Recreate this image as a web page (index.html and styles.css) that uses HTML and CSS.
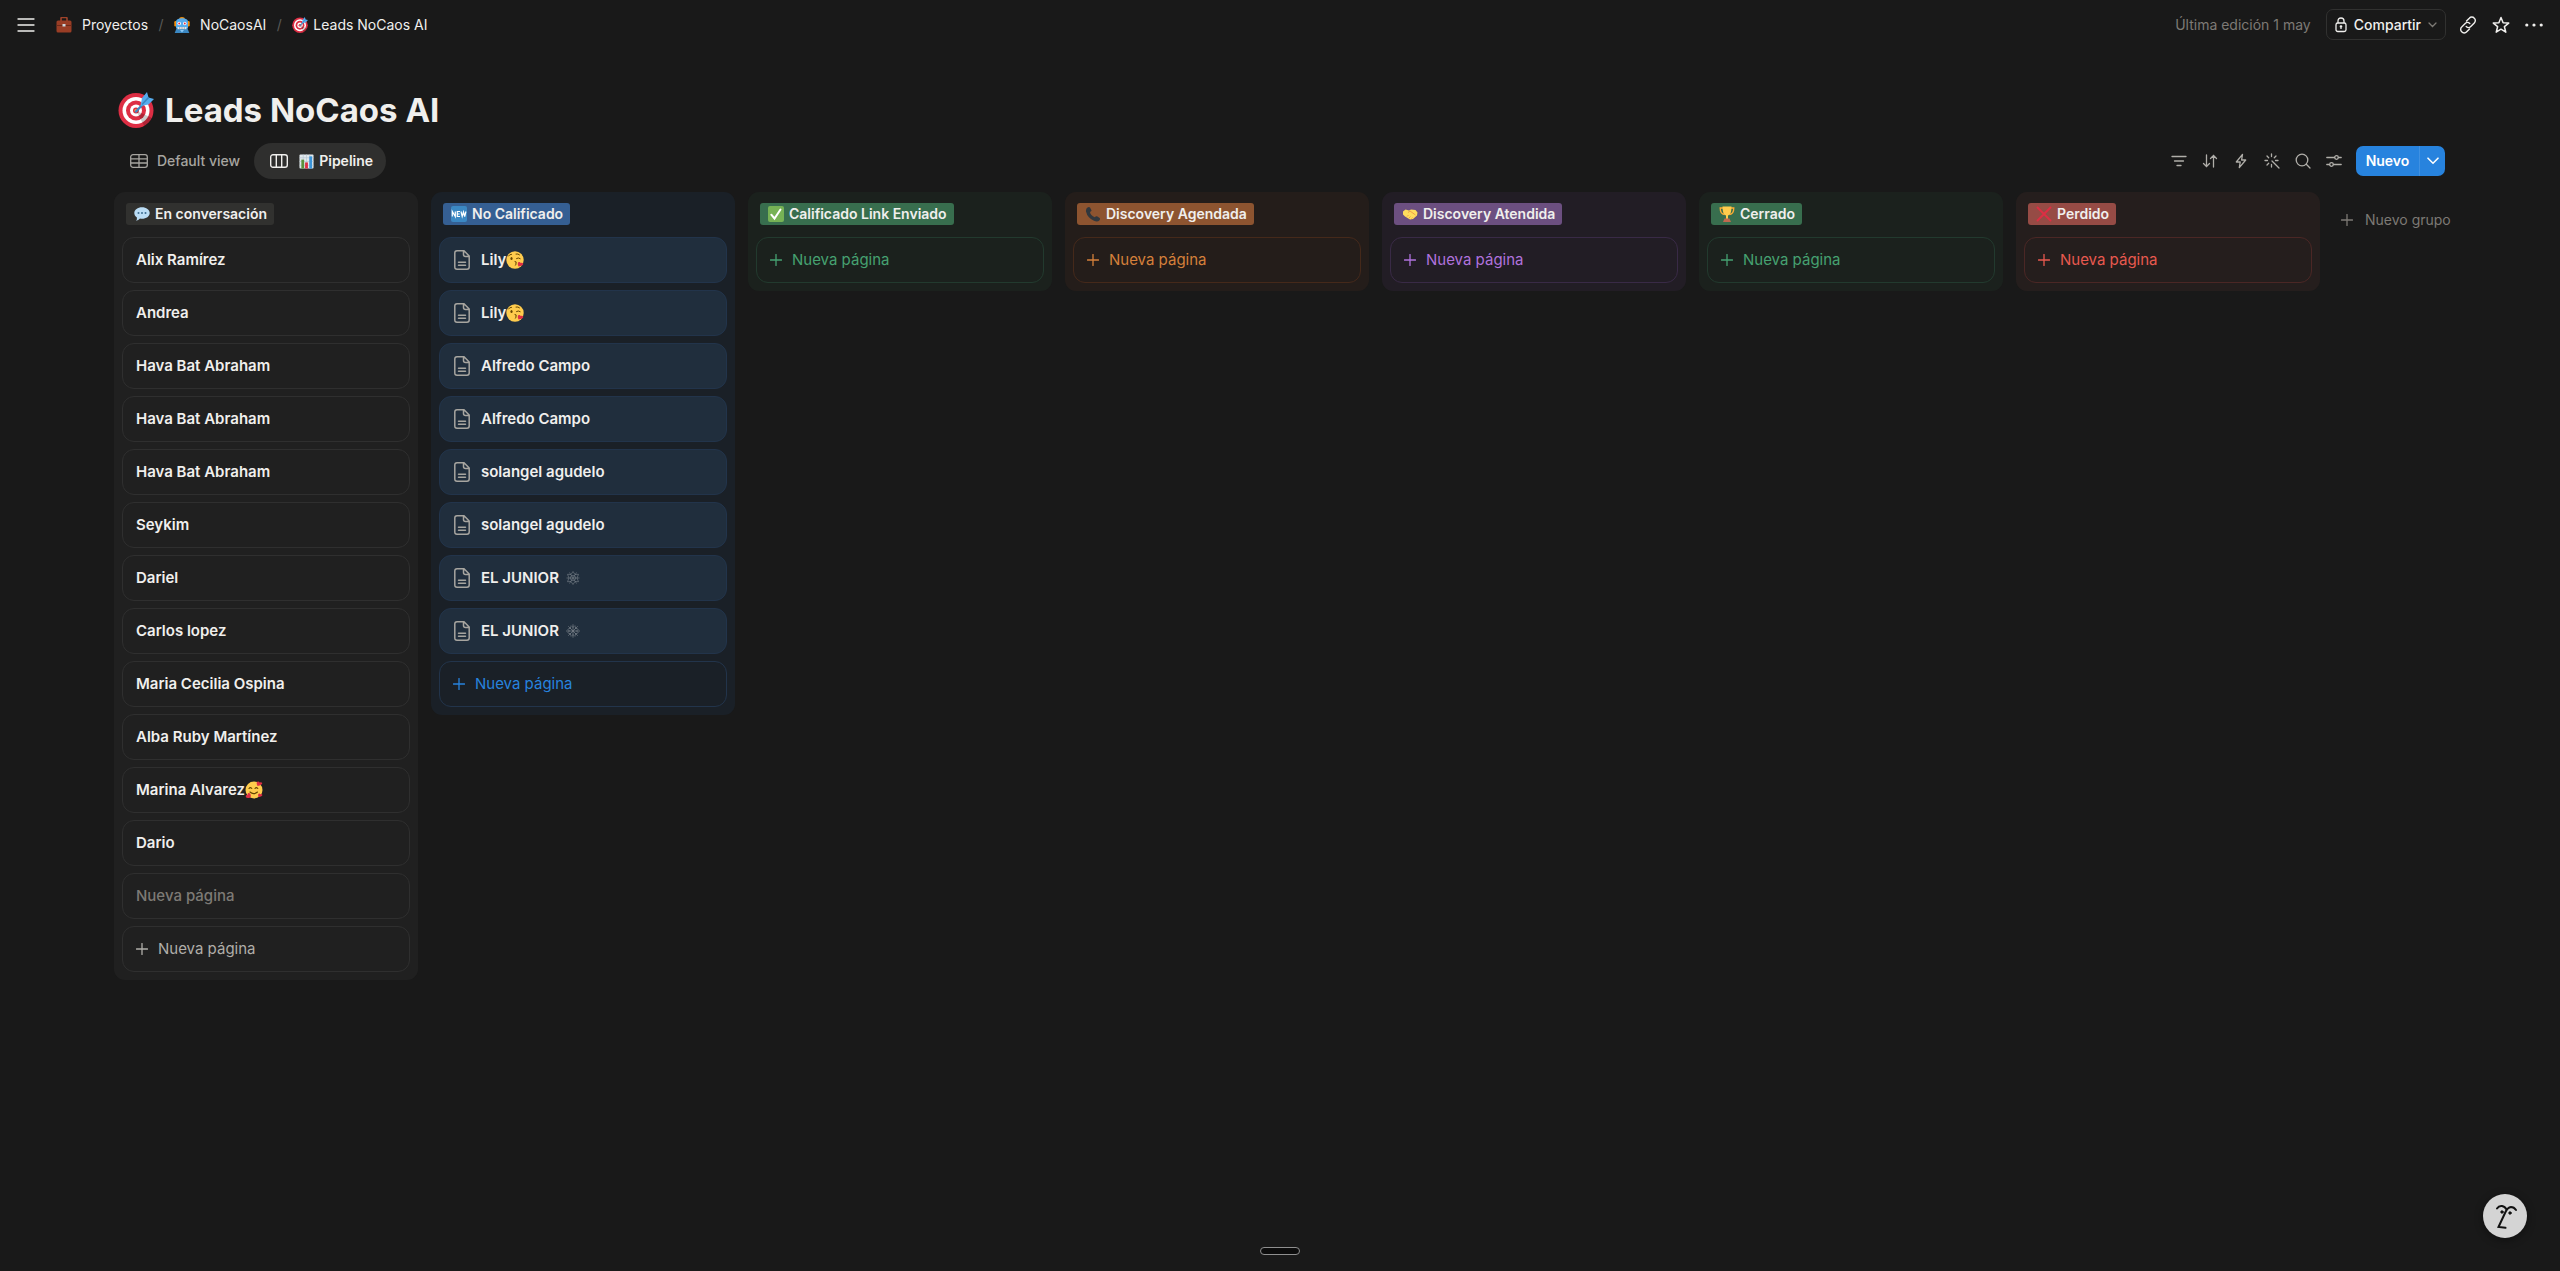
FILE: index.html
```html
<!DOCTYPE html>
<html lang="es">
<head>
<meta charset="utf-8">
<meta name="viewport" content="width=device-width, initial-scale=1">
<title>Leads NoCaos AI</title>
<link rel="stylesheet" href="styles.css">
</head>
<body>
<svg class="sprite" aria-hidden="true">
  <symbol id="target" viewBox="0 0 36 36">
    <circle cx="18" cy="18.500" r="17.500" fill="#dd2e44"/>
    <circle cx="18" cy="18.500" r="13.500" fill="#fff"/>
    <circle cx="18" cy="18.500" r="10" fill="#dd2e44"/>
    <circle cx="18" cy="18.500" r="6" fill="#fff"/>
    <circle cx="18" cy="18.500" r="3" fill="#dd2e44"/>
    <path d="M18.200 18.700l16 7.200a17.500 17.500 0 0 1-8 8z" fill="#000" opacity=".2"/>
    <circle cx="18" cy="18.500" r="1.600" fill="#ffac33"/>
    <path d="M18 19.500L29 8" stroke="#3b88c3" stroke-width="2.400" stroke-linecap="round"/>
    <path d="M22.500 14L24 6l5-6 1.500 5.500L36 7l-5.500 5.500z" fill="#55acee"/>
    <path d="M24 12.500L30.500 5.500" stroke="#3a87c2" stroke-width="1.600"/>
  </symbol>
  <symbol id="briefcase" viewBox="0 0 16 16">
    <path d="M5 4V1.500Q5 .5 6 .5h4q1 0 1 1V4" fill="none" stroke="#a0432a" stroke-width="1.600"/>
    <rect x=".5" y="3.500" width="15" height="12" rx="1.500" fill="#993d25"/>
    <path d="M.5 8.500h15" stroke="#6c2a19"/>
    <rect x="6.500" y="7" width="3" height="2.500" fill="#ccd6dd"/>
  </symbol>
  <symbol id="robot" viewBox="0 0 16 16">
    <ellipse cx="8" cy="1.500" rx="2.800" ry="1.500" fill="#f4900c"/>
    <rect x=".3" y="4" width="2.500" height="5.500" rx="1.200" fill="#f4900c"/>
    <rect x="13.200" y="4" width="2.500" height="5.500" rx="1.200" fill="#f4900c"/>
    <path d="M2 5q0-3.700 6-3.700T14 5v6.500H2z" fill="#55acee"/>
    <path d="M2.500 11.500h11l1.800 4.500H.7z" fill="#3b88c3"/>
    <circle cx="5.200" cy="6.500" r="1.800" fill="#fff"/><circle cx="10.800" cy="6.500" r="1.800" fill="#fff"/>
    <circle cx="5.200" cy="6.500" r=".9" fill="#dd2e44"/><circle cx="10.800" cy="6.500" r=".9" fill="#dd2e44"/>
    <rect x="3.500" y="10" width="9" height="2.200" fill="#e1e8ed"/>
    <path d="M5.700 10v2.200M8 10v2.200M10.300 10v2.200" stroke="#66757f" stroke-width=".5"/>
    <path d="M6 13h4l-2 2.500z" fill="#8ccaf7"/>
  </symbol>
  <symbol id="chart" viewBox="0 0 16 16">
    <rect x=".5" y=".5" width="15" height="15" rx="1" fill="#e1e8ed"/>
    <path d="M.5 4h15M.5 8h15M.5 12h15M4.500.5v15M8 .5v15M11.500.5v15" stroke="#b5c5d0" stroke-width=".7"/>
    <path d="M2.500 6h3v9.500h-3z" fill="#5c913b"/><path d="M6.500 9h3v6.500h-3z" fill="#dd2e44"/><path d="M11 2.500h3v13h-3z" fill="#3b94d9"/>
  </symbol>
  <symbol id="speech" viewBox="0 0 16 16">
    <path d="M8 1.200c4.300 0 7.700 2.500 7.700 5.800S12.300 12.800 8 12.800q-1.200 0-2-.2-1.500 2-4 2.200 1.300-1.300.9-3.400C1.200 10.300.3 8.800.3 7 .3 3.700 3.700 1.200 8 1.200z" fill="#bbddf5"/>
    <circle cx="4.500" cy="7" r="1" fill="#3b6c90"/><circle cx="8" cy="7" r="1" fill="#3b6c90"/><circle cx="11.500" cy="7" r="1" fill="#3b6c90"/>
  </symbol>
  <symbol id="new" viewBox="0 0 16 16">
    <rect width="16" height="16" rx="2" fill="#3b88c3"/>
    <path d="M1.300 10.500V5.500l3 5v-5M9 5.500H6.300v5H9M6.300 8h2.300M10 5.500l1.200 5 1.300-4.500 1.200 4.500 1.200-5" fill="none" stroke="#fff" stroke-width="1.200"/>
  </symbol>
  <symbol id="check" viewBox="0 0 16 16">
    <rect width="16" height="16" rx="2" fill="#77b255"/>
    <path d="M3.300 8.700l3.200 3.800L12.500 3.500" fill="none" stroke="#fff" stroke-width="2" stroke-linecap="round"/>
  </symbol>
  <symbol id="phone" viewBox="0 0 16 16">
    <path d="M2.500 1.500Q4 .5 5 1.500l1.500 2.700q.3 1-1.500 1.800.5 3.500 4.800 5.300 1.200-1.600 2.200-1l2.700 1.700q.8 1-.4 2.500-1.800 1.700-5.300.3Q2.500 12 1 5.500.7 2.700 2.500 1.500z" fill="#31373d"/>
  </symbol>
  <symbol id="hands" viewBox="0 0 16 16">
    <path d="M1 5.500L3.500 3.500 7 4.500 9 3.500l4.500.5 2 2.500-.5 3-4 3.500-3 .5L3 10.500 1 8.500z" fill="#ffdc5d"/>
    <path d="M6 6.500l2-1.500 5.500 4M5 10.500l1.500-1.500M7 12l1.500-1.500M9.500 12.500l1-1" fill="none" stroke="#ef9645" stroke-width=".9"/>
  </symbol>
  <symbol id="trophy" viewBox="0 0 16 16">
    <path d="M4 2H1.200q0 6 4.300 6.500M12 2h2.800q0 6-4.300 6.500" fill="none" stroke="#ffac33" stroke-width="1.300"/>
    <path d="M3.500.5h9Q12.500 9 9 9.500V13H7V9.500Q3.500 9 3.500.5z" fill="#ffcc4d"/>
    <path d="M5.500 12.500h5l1.500 3.500H4z" fill="#c1694f"/>
  </symbol>
  <symbol id="cross" viewBox="0 0 16 16">
    <path d="M1.500 1.500l13 13M14.500 1.500l-13 13" stroke="#dd2e44" stroke-width="1.900" stroke-linecap="round"/>
  </symbol>
  <symbol id="kiss" viewBox="0 0 18 18">
    <circle cx="9" cy="9" r="8.700" fill="#ffcc4d"/>
    <ellipse cx="5.500" cy="7.500" rx="1.100" ry="1.500" fill="#664500"/>
    <path d="M2.500 5q1-1.800 3-1.700M10 3q2-.5 3.500.8M10.500 7.500q1.800-1.300 3.700.1M9 10.500q2.500.2.700 1.700 2 .7-.5 2" fill="none" stroke="#664500" stroke-width="1" stroke-linecap="round"/>
    <path d="M12.500 15.500q-1.500-3.800.3-4.500 1.500-.4 1.800 1 1.700-.8 2.500.5 1 2-4.600 3z" fill="#dd2e44"/>
  </symbol>
  <symbol id="hearts" viewBox="0 0 18 18">
    <circle cx="9" cy="9" r="8.500" fill="#ffcc4d"/>
    <path d="M4 7.500q1.300-1.700 2.800 0M10 7.500q1.300-1.700 2.800 0M5 11q3.500 3.300 7.500 0" fill="none" stroke="#664500" stroke-width="1.100" stroke-linecap="round"/>
    <path d="M12.500 5Q10.500.8 13 .4q1.300 0 1.500 1.200Q16.500.5 17.200 2q.5 2-4.700 3zM5.500 16.500Q.5 18 .7 15q.4-1.500 1.900-1-.3-2 1.400-1.900 2.500.4 1.500 4.400zM13.500 16q-1-3 .6-3.600 1 0 1.200.9 1.400-.6 2 .4.500 1.700-3.800 2.300z" fill="#dd2e44"/>
  </symbol>
  <symbol id="doc" viewBox="0 0 16 20">
    <path d="M3 .8h7l5.200 5.200v11q0 2.200-2.200 2.200H3Q.8 19.200.8 17V3Q.8.800 3 .8zM9.500 1v3.500q0 2 2 2H15M4.500 12.200h7M4.500 15.200h7" fill="none" stroke="#a7a5a0" stroke-width="1.500" stroke-linecap="round"/>
  </symbol>
  <symbol id="plus" viewBox="0 0 12 12">
    <path d="M6 .5v11M.5 6h11" stroke="currentColor" stroke-width="1.300" stroke-linecap="round"/>
  </symbol>
  <symbol id="ornament" viewBox="0 0 14 14">
    <path d="M7 .5l2 3 3.500-.2L11 7l1.500 3.700L9 10.500l-2 3-2-3-3.500.2L3 7 1.500 3.300 5 3.500zM.5 7h13M3.500 1.500l7 11M10.500 1.500l-7 11" fill="none" stroke="currentColor" stroke-width=".6"/>
    <circle cx="7" cy="7" r="2.600" fill="none" stroke="currentColor" stroke-width=".6"/>
  </symbol>
  <symbol id="flake" viewBox="0 0 14 14">
    <path d="M7 .3v13.400M0 7h14M2.300 2.300l9.400 9.400M11.700 2.300l-9.400 9.400M5 1.500l2 2 2-2M5 12.500l2-2 2 2M1.500 5l2 2-2 2M12.500 5l-2 2 2 2M4.500 2.500v2h-2M9.500 2.500v2h2M4.500 11.500v-2h-2M9.500 11.500v-2h2" fill="none" stroke="currentColor" stroke-width=".7"/>
  </symbol>
</svg>

<header class="topbar">
  <button class="icon-btn menu" aria-label="Abrir menú"><svg width="18" height="16" viewBox="0 0 18 16"><path d="M1 2h16M1 8h16M1 14h16" stroke="currentColor" stroke-width="1.300" stroke-linecap="round"/></svg></button>
  <nav class="crumbs" aria-label="Ruta">
    <a href="#" class="crumb"><svg class="emoji"><use href="#briefcase"/></svg>Proyectos</a>
    <span class="slash">/</span>
    <a href="#" class="crumb"><svg class="emoji"><use href="#robot"/></svg>NoCaosAI</a>
    <span class="slash">/</span>
    <a href="#" class="crumb crumb-current"><svg class="emoji"><use href="#target"/></svg>Leads NoCaos AI</a>
  </nav>
  <div class="top-actions">
    <span class="edited">Última edición 1 may</span>
    <button class="share">
      <svg width="12" height="16" viewBox="0 0 12 16" fill="none" stroke="currentColor" stroke-width="1.300"><rect x="1" y="6" width="10" height="8.500" rx="1.800"/><path d="M3 6V4q0-3 3-3t3 3v2M6 10.500v1.500"/><circle cx="6" cy="9.500" r=".7" fill="currentColor"/></svg>
      Compartir
      <svg class="caret" width="9" height="6" viewBox="0 0 9 6"><path d="M1 1l3.500 3.500L8 1" fill="none" stroke="currentColor" stroke-width="1.300" stroke-linecap="round"/></svg>
    </button>
    <button class="icon-btn" aria-label="Copiar enlace"><svg width="18" height="18" viewBox="0 0 18 18" fill="none" stroke="currentColor" stroke-width="1.400" stroke-linecap="round"><path d="M7.500 5l2.800-2.800a3.300 3.300 0 0 1 5 0 3.300 3.300 0 0 1 0 4.800l-3.500 3.500a3.300 3.300 0 0 1-4.600 0M10.500 13l-2.800 2.800a3.300 3.300 0 0 1-5 0 3.300 3.300 0 0 1 0-4.800l3.500-3.500a3.300 3.300 0 0 1 4.600 0"/></svg></button>
    <button class="icon-btn" aria-label="Favorito"><svg width="18" height="18" viewBox="0 0 18 18"><path d="M9 1.500l2.100 5.200 5.600.4-4.300 3.600 1.400 5.500L9 13.200l-4.800 3 1.400-5.500L1.300 7.100l5.600-.4z" fill="none" stroke="currentColor" stroke-width="1.500" stroke-linejoin="round"/></svg></button>
    <button class="icon-btn" aria-label="Más"><svg width="18" height="18" viewBox="0 0 18 18" fill="currentColor"><circle cx="1.800" cy="9" r="1.600"/><circle cx="9" cy="9" r="1.600"/><circle cx="16.200" cy="9" r="1.600"/></svg></button>
  </div>
</header>

<main class="page">
  <h1 class="title"><svg class="title-emoji"><use href="#target"/></svg>Leads NoCaos AI</h1>

  <div class="viewbar">
    <div class="tabs">
      <button class="tab"><svg width="18" height="14" viewBox="0 0 18 14" fill="none" stroke="currentColor" stroke-width="1.300"><rect x=".7" y=".7" width="16.600" height="12.600" rx="2.300"/><path d="M1 4.800h16M1 9h16M9 1v12"/></svg>Default view</button>
      <button class="tab tab-active"><svg width="18" height="14" viewBox="0 0 18 14" fill="none" stroke="currentColor" stroke-width="1.400"><rect x=".7" y=".7" width="16.600" height="12.600" rx="2.300"/><path d="M6.300 1v12M11.700 1v12"/></svg><span class="tab-label"><svg class="tab-emoji"><use href="#chart"/></svg>Pipeline</span></button>
    </div>
    <div class="tools">
      <button class="tool" aria-label="Filtrar"><svg viewBox="0 0 16 16"><path d="M1 3.500h14M3.500 8h9M6 12.500h4"/></svg></button>
      <button class="tool" aria-label="Ordenar"><svg viewBox="0 0 16 16"><path d="M4.500 2v11.500M1.500 10.500l3 3 3-3M11.500 14V2.500M8.500 5.500l3-3 3 3"/></svg></button>
      <button class="tool" aria-label="Automatizaciones"><svg viewBox="0 0 16 16"><path d="M9.500 1.300L3.300 9h3.900l-.9 5.700L12.700 7H8.600z" stroke-linejoin="round"/></svg></button>
      <button class="tool" aria-label="IA"><svg viewBox="0 0 16 16"><path d="M7.500 1v2.500M1 7.500h2.500M3 3l1.700 1.700M12 3l-1.700 1.700M3 12l1.700-1.700M7.500 11.500V14M11.500 7.500H14M8 8l7 7"/></svg></button>
      <button class="tool" aria-label="Buscar"><svg viewBox="0 0 16 16"><circle cx="7" cy="7" r="5.800"/><path d="M11.300 11.300l3.700 3.700"/></svg></button>
      <button class="tool" aria-label="Ajustes"><svg viewBox="0 0 16 16"><path d="M.8 4.500h7.700M12.500 4.500h2.700M.8 11.500h2.700M7.500 11.500h7.700"/><circle cx="10.500" cy="4.500" r="1.800"/><circle cx="5.500" cy="11.500" r="1.800"/></svg></button>
      <div class="new-group">
        <button class="new-main">Nuevo</button>
        <button class="new-more" aria-label="Más opciones"><svg width="12" height="8" viewBox="0 0 12 8"><path d="M1 1.200l5 5 5-5" fill="none" stroke="currentColor" stroke-width="1.600" stroke-linecap="round"/></svg></button>
      </div>
    </div>
  </div>

  <div class="board">
    <section class="column gray">
      <h2 class="badge"><svg class="emoji"><use href="#speech"/></svg>En conversación</h2>
      <a href="#" class="card">Alix Ramírez</a>
      <a href="#" class="card">Andrea</a>
      <a href="#" class="card">Hava Bat Abraham</a>
      <a href="#" class="card">Hava Bat Abraham</a>
      <a href="#" class="card">Hava Bat Abraham</a>
      <a href="#" class="card">Seykim</a>
      <a href="#" class="card">Dariel</a>
      <a href="#" class="card">Carlos lopez</a>
      <a href="#" class="card">Maria Cecilia Ospina</a>
      <a href="#" class="card">Alba Ruby Martínez</a>
      <a href="#" class="card">Marina Alvarez<svg class="inline-emoji"><use href="#hearts"/></svg></a>
      <a href="#" class="card">Dario</a>
      <a href="#" class="card card-empty">Nueva página</a>
      <button class="add"><svg class="plus"><use href="#plus"/></svg>Nueva página</button>
    </section>

    <section class="column blue">
      <h2 class="badge"><svg class="emoji"><use href="#new"/></svg>No Calificado</h2>
      <a href="#" class="card"><svg class="doc"><use href="#doc"/></svg>Lily<svg class="inline-emoji"><use href="#kiss"/></svg></a>
      <a href="#" class="card"><svg class="doc"><use href="#doc"/></svg>Lily<svg class="inline-emoji"><use href="#kiss"/></svg></a>
      <a href="#" class="card"><svg class="doc"><use href="#doc"/></svg>Alfredo Campo</a>
      <a href="#" class="card"><svg class="doc"><use href="#doc"/></svg>Alfredo Campo</a>
      <a href="#" class="card"><svg class="doc"><use href="#doc"/></svg>solangel agudelo</a>
      <a href="#" class="card"><svg class="doc"><use href="#doc"/></svg>solangel agudelo</a>
      <a href="#" class="card"><svg class="doc"><use href="#doc"/></svg>EL JUNIOR<svg class="symbol"><use href="#ornament"/></svg></a>
      <a href="#" class="card"><svg class="doc"><use href="#doc"/></svg>EL JUNIOR<svg class="symbol"><use href="#flake"/></svg></a>
      <button class="add"><svg class="plus"><use href="#plus"/></svg>Nueva página</button>
    </section>

    <section class="column green">
      <h2 class="badge"><svg class="emoji"><use href="#check"/></svg>Calificado Link Enviado</h2>
      <button class="add"><svg class="plus"><use href="#plus"/></svg>Nueva página</button>
    </section>
    <section class="column orange">
      <h2 class="badge"><svg class="emoji"><use href="#phone"/></svg>Discovery Agendada</h2>
      <button class="add"><svg class="plus"><use href="#plus"/></svg>Nueva página</button>
    </section>
    <section class="column purple">
      <h2 class="badge"><svg class="emoji"><use href="#hands"/></svg>Discovery Atendida</h2>
      <button class="add"><svg class="plus"><use href="#plus"/></svg>Nueva página</button>
    </section>
    <section class="column green">
      <h2 class="badge"><svg class="emoji"><use href="#trophy"/></svg>Cerrado</h2>
      <button class="add"><svg class="plus"><use href="#plus"/></svg>Nueva página</button>
    </section>
    <section class="column red">
      <h2 class="badge"><svg class="emoji"><use href="#cross"/></svg>Perdido</h2>
      <button class="add"><svg class="plus"><use href="#plus"/></svg>Nueva página</button>
    </section>
    <button class="add-group"><svg class="plus"><use href="#plus"/></svg>Nuevo grupo</button>
  </div>
</main>

<div class="handle"></div>
<button class="assistant" aria-label="Asistente"><svg width="44" height="44" viewBox="0 0 44 44" fill="none" stroke="#111" stroke-width="2" stroke-linecap="round"><path d="M14 14.500q2-3 5-2.500 3 .5 4.500 3.500M33 16q-2-3-5-3-3.500.5-5.500 5L15.500 33l7 .8"/><circle cx="19" cy="18" r="1.200" fill="#111" stroke-width="1"/><circle cx="27" cy="19" r="1.200" fill="#111" stroke-width="1"/></svg></button>
</body>
</html>
```
FILE: styles.css
```css
* { box-sizing: border-box; }
body {
  margin: 0;
  min-height: 100vh;
  background: #191919;
  color: #f0efed;
  font: 14px/22px Inter, "Liberation Sans", sans-serif;
  overflow-x: hidden;
}
button {
  margin: 0;
  padding: 0;
  border: 0;
  background: none;
  color: inherit;
  font: inherit;
  cursor: pointer;
}
a { color: inherit; text-decoration: none; }
svg { flex: none; display: block; }
.sprite { position: absolute; width: 0; height: 0; }
.emoji { width: 16px; height: 16px; }

/* Top bar */
.topbar {
  display: flex;
  align-items: center;
  height: 49px;
  padding: 0 17px;
}
.menu { margin-right: 21px; }
.crumbs { display: flex; align-items: center; white-space: nowrap; }
.crumb { display: flex; align-items: center; gap: 10px; }
.crumb-current { gap: 5px; }
.slash { width: 26px; text-align: center; color: #5a5957; }
.top-actions {
  display: flex;
  align-items: center;
  gap: 15px;
  margin-left: auto;
}
.edited { color: #7d7a75; }
.share {
  display: flex;
  align-items: center;
  gap: 7px;
  height: 31px;
  padding: 0 8px;
  margin-right: -2px;
  border: 1px solid #313130;
  border-radius: 7px;
  font-weight: 500;
  white-space: nowrap;
}
.caret { color: #7d7a75; }
.icon-btn { display: flex; }

/* Title and views */
.page { padding: 38px 114px 60px; }
.title {
  display: flex;
  align-items: center;
  gap: 11px;
  margin: 0;
  font-size: 33px;
  line-height: 46px;
  font-weight: 700;
}
.title-emoji { width: 36px; height: 36px; margin-left: 4px; }
.viewbar {
  display: flex;
  align-items: center;
  justify-content: space-between;
  margin-top: 10px;
}
.tabs, .tools { display: flex; align-items: center; }
.tab {
  display: flex;
  align-items: center;
  gap: 9px;
  height: 36px;
  padding: 0 14px 0 16px;
  border-radius: 18px;
  color: #a7a5a0;
  font-weight: 500;
}
.tab-active {
  gap: 11px;
  padding: 0 13px 0 16px;
  background: #2f2f2e;
  color: #f0efed;
  font-weight: 600;
}
.tab-label { display: flex; align-items: center; gap: 5px; }
.tab-emoji { width: 15px; height: 15px; }
.tool { display: flex; justify-content: center; width: 31px; color: #b0aea9; }
.tool svg {
  width: 16px;
  height: 16px;
  fill: none;
  stroke: currentColor;
  stroke-width: 1.3;
  stroke-linecap: round;
}
.new-group {
  display: flex;
  height: 30px;
  margin-left: 7px;
  margin-right: 1px;
  border-radius: 7px;
  background: #2783de;
  color: #fff;
}
.new-main { width: 63px; font-weight: 600; }
.new-more {
  display: flex;
  align-items: center;
  justify-content: center;
  width: 26px;
  border-left: 1px solid #3f91e2;
}

/* Board */
.board { display: flex; align-items: flex-start; gap: 13px; margin-top: 13px; }
.column {
  flex: 0 0 304px;
  display: flex;
  flex-direction: column;
  gap: 7px;
  padding: 11px 8px 8px;
  border-radius: 11px;
  background: var(--bg);
}
.badge {
  display: flex;
  align-items: center;
  align-self: flex-start;
  gap: 5px;
  height: 22px;
  margin: 0 4px 5px;
  padding: 0 7px 0 8px;
  border-radius: 3px;
  background: var(--badge);
  font-size: 14px;
  font-weight: 600;
  white-space: nowrap;
}
.card, .add {
  display: flex;
  align-items: center;
  height: 46px;
  padding: 0 13px;
  border: 1px solid var(--line);
  border-radius: 12px;
  font-size: 15px;
}
.card { background: var(--card); font-weight: 600; }
.card-empty { color: #7d7a75; font-weight: 500; }
.add { gap: 10px; color: var(--ink); }
.plus { width: 12px; height: 12px; }
.doc { width: 16px; height: 20px; margin: 0 11px 0 1px; }
.inline-emoji { width: 18px; height: 18px; }
.symbol { width: 14px; height: 14px; margin-left: 7px; color: #7b838b; }

.gray { --bg: #202020; --card: #202020; --line: #2f2f2f; --badge: #31312f; --ink: #b0aea9; }
.blue { --bg: #1a2027; --card: #202e3d; --line: #22344b; --badge: #355f93; --ink: #2783de; }
.green { --bg: #1b211d; --line: #223a2e; --badge: #386e4e; --ink: #46a171; }
.orange { --bg: #241d1a; --line: #45291a; --badge: #8d5430; --ink: #d5803b; }
.purple { --bg: #221d25; --line: #392a46; --badge: #6c4f80; --ink: #b072dd; }
.red { --bg: #251e1d; --line: #4b2725; --badge: #964b45; --ink: #e9594f; }

.add-group {
  display: flex;
  align-items: center;
  gap: 12px;
  height: 30px;
  margin-top: 13px;
  padding-left: 8px;
  color: #7d7a75;
  white-space: nowrap;
}

/* Floating controls */
.handle {
  position: fixed;
  left: 50%;
  bottom: 16px;
  width: 40px;
  height: 8px;
  margin-left: -20px;
  border: 1px solid #8f8f8f;
  border-radius: 4px;
  background: #0c0c0c;
}
.assistant {
  position: fixed;
  right: 33px;
  bottom: 33px;
  width: 44px;
  height: 44px;
  border-radius: 50%;
  background: #d4d4d4;
  box-shadow: 0 2px 8px rgba(0, 0, 0, .4);
}
```
